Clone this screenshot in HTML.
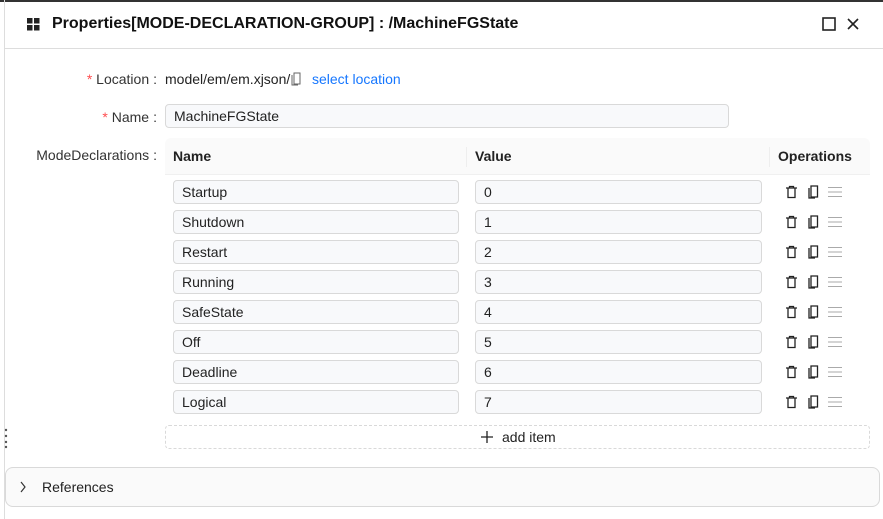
<!DOCTYPE html>
<html><head><style>
*{box-sizing:border-box;margin:0;padding:0}
body{width:883px;height:519px;background:#fff;font-family:"Liberation Sans",sans-serif;font-size:14px;color:#222;position:relative;overflow:hidden}
.a{position:absolute}
.inp{position:absolute;height:24px;border:1px solid #d9d9d9;border-radius:4px;background:#f8f9fb;padding-left:8px;line-height:22px;font-size:14px;color:#222}
.lbl{position:absolute;right:726px;text-align:right;white-space:nowrap;color:#333}
.req{color:#ff4d4f}
.th{position:absolute;top:138px;height:37px;line-height:37px;font-weight:bold;font-size:14px;padding-left:8px}
</style></head><body>
<div class="a" style="left:0;top:0;width:883px;height:2px;background:#333"></div>
<div class="a" style="left:4px;top:0;width:1px;height:519px;background:#ddd"></div>
<div class="a" style="left:4px;top:48px;width:879px;height:1px;background:#ddd"></div>
<svg class="a" style="left:27px;top:18px" width="13" height="13"><rect x="0" y="0" width="5.5" height="5.5" fill="#222"/><rect x="7" y="0" width="5.5" height="5.5" fill="#222"/><rect x="0" y="7" width="5.5" height="5.5" fill="#222"/><rect x="7" y="7" width="5.5" height="5.5" fill="#222"/></svg>
<div class="a" style="left:52px;top:15px;font-weight:bold;font-size:16px;color:#111">Properties[MODE-DECLARATION-GROUP] : /MachineFGState</div>
<svg class="a" style="left:822px;top:17px" width="14" height="14"><rect x="1" y="1" width="12" height="12" fill="none" stroke="#222" stroke-width="1.6"/></svg>
<svg class="a" style="left:846px;top:17px" width="14" height="14"><path d="M2 2L12 12M12 2L2 12" stroke="#222" stroke-width="1.6"/></svg>

<div class="lbl" style="top:71px"><span class="req">* </span>Location<span style="margin-left:4px">:</span></div>
<div class="a" style="left:165px;top:71px">model/em/em.xjson/</div>
<svg class="a" style="left:291px;top:72px" width="10" height="14"><path d="M3 1H9V12H3Z M1 3V13H7" fill="none" stroke="#666" stroke-width="1"/></svg>
<div class="a" style="left:312px;top:71px;color:#1677ff">select location</div>

<div class="lbl" style="top:109px"><span class="req">* </span>Name<span style="margin-left:4px">:</span></div>
<div class="inp" style="left:165px;top:104px;width:564px">MachineFGState</div>

<div class="lbl" style="top:147px">ModeDeclarations<span style="margin-left:4px">:</span></div>
<div class="a" style="left:165px;top:138px;width:705px;height:37px;background:#fafafa;border-radius:6px 6px 0 0;border-bottom:1px solid #f0f0f0"></div>
<div class="a" style="left:466px;top:147px;width:1px;height:20px;background:#eee"></div>
<div class="a" style="left:769px;top:147px;width:1px;height:20px;background:#eee"></div>
<div class="th" style="left:165px">Name</div>
<div class="th" style="left:467px">Value</div>
<div class="th" style="left:770px">Operations</div>

<div id="rows"></div>
<script>
var n=["Startup","Shutdown","Restart","Running","SafeState","Off","Deadline","Logical"],h="";
for(var i=0;i<8;i++){var y=180+i*30;
h+='<div class="inp" style="left:173px;top:'+y+'px;width:286px">'+n[i]+'</div>';
h+='<div class="inp" style="left:475px;top:'+y+'px;width:287px">'+i+'</div>';
h+='<svg class="a" style="left:785px;top:'+(y+5)+'px" width="13" height="14"><path d="M1 3H12M4.5 3V1.5H8.5V3M3 3V12.5H10V3" fill="none" stroke="#222" stroke-width="1.3"/></svg>';
h+='<svg class="a" style="left:807px;top:'+(y+5)+'px" width="12" height="14"><path d="M4 1H10.5V12H4Z M2 3V13H8" fill="none" stroke="#222" stroke-width="1.3"/></svg>';
h+='<svg class="a" style="left:828px;top:'+(y+5)+'px" width="14" height="14"><path d="M0 2.5H14M0 7H14M0 11.5H14" stroke="#aaa" stroke-width="1.1"/></svg>';}
document.getElementById("rows").innerHTML=h;
</script>

<div class="a" style="left:165px;top:425px;width:705px;height:24px;border:1px dashed #d9d9d9;border-radius:4px"></div>
<svg class="a" style="left:480px;top:430px" width="14" height="14"><path d="M7 1V13M1 7H13" stroke="#222" stroke-width="1.3"/></svg>
<div class="a" style="left:502px;top:429px">add item</div>
<svg class="a" style="left:4px;top:427px" width="5" height="22"><circle cx="2" cy="3" r="1.2" fill="#555"/><circle cx="2" cy="9" r="1.2" fill="#555"/><circle cx="2" cy="15" r="1.2" fill="#555"/><circle cx="2" cy="20" r="1.2" fill="#555"/></svg>

<div class="a" style="left:5px;top:467px;width:875px;height:40px;border:1px solid #d9d9d9;border-radius:8px;background:#fafafa"></div>
<svg class="a" style="left:19px;top:481px" width="8" height="12"><path d="M2 1L6 6L2 11" fill="none" stroke="#333" stroke-width="1.2"/></svg>
<div class="a" style="left:42px;top:479px">References</div>
</body></html>
